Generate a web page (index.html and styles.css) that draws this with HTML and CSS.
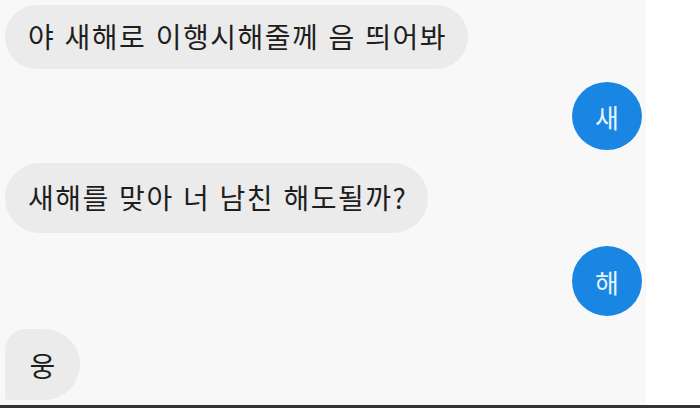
FILE: index.html
```html
<!DOCTYPE html>
<html lang="ko">
<head>
    <meta charset="UTF-8">
    <meta name="viewport" content="width=device-width, initial-scale=1.0">
    <title>새해 이행시</title>
    <link rel="stylesheet" href="styles.css">
</head>
<body>
    <div class="chat">
        <div class="bubble them first">야 새해로 이행시해줄께 음 띄어봐</div>
        <div class="me"><span class="dot">새</span></div>
        <div class="bubble them second">새해를 맞아 너 남친 해도될까?</div>
        <div class="me"><span class="dot tall">해</span></div>
        <div class="bubble them last">웅</div>
    </div>
    <div class="bottom-bar"></div>
</body>
</html>
```

FILE: styles.css
```css
/* General styling */
body {
    margin: 0;
    background-color: #ffffff;
    font-family: "Noto Sans CJK KR", "Noto Sans", sans-serif;
    color: #1e1e1e;
    height: 408px;
    display: flex;
    flex-direction: column;
    overflow: hidden;
}

.chat {
    width: 646px;
    height: 405px;
    box-sizing: border-box;
    padding: 5px 4px 0 5px;
    background-color: #f8f8f8;
    display: flex;
    flex-direction: column;
    align-items: flex-start;
    gap: 13px;
}

/* Grey bubbles on the left */
.bubble {
    background-color: #ebebeb;
    border-radius: 36px;
    padding: 0 21px 3px 23px;
    display: flex;
    align-items: center;
    font-size: 28px;
    letter-spacing: 1.5px;
    box-sizing: border-box;
}

.first {
    height: 64px;
}

.second {
    height: 70px;
}

.last {
    width: 75px;
    height: 71px;
    justify-content: center;
    padding: 0;
    letter-spacing: 0;
    border-radius: 24px 40px 40px 4px;
}

/* Blue replies on the right */
.me {
    align-self: stretch;
    display: flex;
    justify-content: flex-end;
}

.dot {
    width: 70px;
    height: 68px;
    border-radius: 50%;
    background-color: #1a86e4;
    color: #e6f4ff;
    font-size: 26px;
    display: flex;
    align-items: center;
    justify-content: center;
}

.dot.tall {
    height: 70px;
}

.bottom-bar {
    height: 3px;
    background-color: #333333;
}
```
